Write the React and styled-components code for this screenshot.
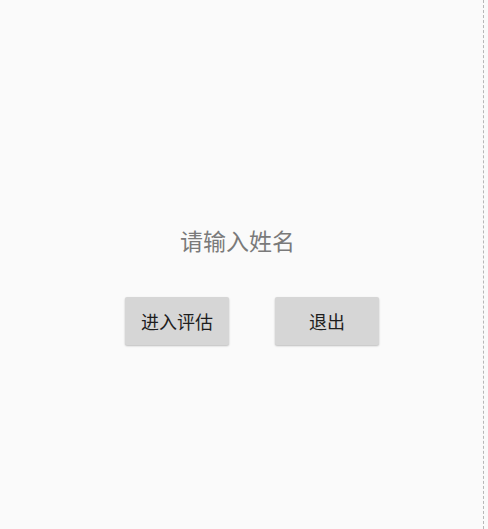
import React from "react";
import styled, {createGlobalStyle} from "styled-components";

const GlobalStyle = createGlobalStyle`
html, body {
    margin: 0;
    padding: 0;
    background: #fafafa;
}
body {
    font-family: "Noto Sans CJK SC", "Noto Sans", sans-serif;
}
`;

const Screen = styled.div`
width: 484px;
height: 529px;
box-sizing: border-box;
border-right: 1px dashed #b8b8b8;
background: #fafafa;
display: flex;
flex-direction: column;
padding-top: 224px;
`;

const Hint = styled.div`
padding-left: 180px;
font-size: 23px;
line-height: 32px;
color: #7a7a7a;
`;

const ButtonRow = styled.div`
display: flex;
gap: 46px;
padding-left: 125px;
margin-top: 41px;
`;

const Button = styled.button`
width: 104px;
height: 48px;
border: none;
border-radius: 2px;
background: #d6d6d6;
box-shadow: 0 1px 2px rgba(0, 0, 0, 0.25);
font-family: "Noto Sans CJK SC", sans-serif;
font-size: 18px;
color: #1e1e1e;
padding: 0;
`;

const App = () => {
    return (
        <>
            <GlobalStyle/>
            <Screen>
                <Hint>请输入姓名</Hint>
                <ButtonRow>
                    <Button>进入评估</Button>
                    <Button>退出</Button>
                </ButtonRow>
            </Screen>
        </>
    );
}

export default App;
